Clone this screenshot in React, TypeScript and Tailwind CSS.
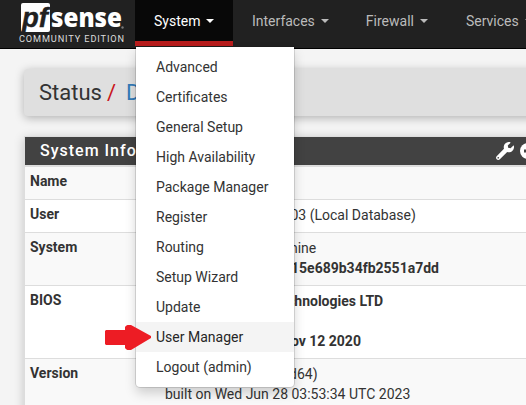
import React from "react";

const menu = [
  "Advanced", "Certificates", "General Setup", "High Availability", "Package Manager", "Register",
  "Routing", "Setup Wizard", "Update", "User Manager", "Logout (admin)",
];

function Caret() {
  return <span className="ml-1.5 h-0 w-0 border-x-4 border-t-4 border-x-transparent border-t-current" />;
}

function Logo() {
  return (
    <svg className="ml-[18px] block h-[46px] w-[110px] shrink-0" viewBox="0 0 110 46">
      <rect x="3" y="3" width="29" height="29" rx="2" fill="#fff" />
      <text x="4" y="27" fontFamily="Liberation Sans" fontSize="28" fontWeight="700" fontStyle="italic" fill="#212121" stroke="#212121" strokeWidth="0.4" textLength="26" lengthAdjust="spacingAndGlyphs">pf</text>
      <text x="33" y="27" fontFamily="Open Sans" fontSize="27" fontWeight="800" fill="#fff" textLength="71" lengthAdjust="spacingAndGlyphs">sense</text>
      <circle cx="104.500" cy="27.500" r="1.200" fill="#777" />
      <text x="1" y="42" fontFamily="Roboto" fontSize="9.200" fill="#ddd" textLength="105">COMMUNITY EDITION</text>
    </svg>
  );
}

function NavItem({ label, className }: { label: string; className: string }) {
  return (
    <a className={`flex shrink-0 items-center whitespace-nowrap pt-px text-[#bbb] ${className}`}>
      {label}
      <Caret />
    </a>
  );
}

function Row({ label, className, children }: { label: string; className: string; children?: React.ReactNode }) {
  return (
    <div className={`flex shrink-0 border-t border-[#ddd] pt-[4px] ${className}`}>
      <div className="w-[140px] shrink-0 pl-[5px] font-bold">{label}</div>
      <div className="flex-1 whitespace-nowrap pt-px">{children}</div>
    </div>
  );
}

export default function App() {
  return (
    <div className="relative h-[405px] w-[526px] overflow-hidden bg-[#f4f4f4] font-[Roboto,sans-serif] text-[14px] leading-[20px] text-[#333]">
      <header className="flex h-[49px] items-start border-b border-black bg-[#212121]">
        <Logo />
        <div className="ml-[7px] flex h-[46px] w-[98px] shrink-0 items-center border-b-[5px] border-[#b71c1c] bg-[#080808] pl-[19px] pt-px text-white">
          System
          <Caret />
        </div>
        <NavItem label="Interfaces" className="ml-[19px] h-[41px]" />
        <NavItem label="Firewall" className="ml-[37px] h-[41px]" />
        <NavItem label="Services" className="ml-[38px] h-[41px]" />
      </header>

      <div className="ml-[24px] mt-[20px] flex h-[47px] w-[540px] items-center rounded-[4px] bg-[#dfdfdf] pl-[15px] text-[22px] shadow-[0_2px_10px_rgba(0,0,0,0.28)]">
        <span>Status</span>
        <span className="ml-[5px] text-[#c9151b]">/</span>
        <span className="ml-[10px] text-[#337ab7]">Dashboard</span>
      </div>

      <section className="ml-[24px] mt-[20px] w-[540px] border border-[#ddd] bg-white shadow-[0_2px_10px_rgba(0,0,0,0.2)]">
        <h2 className="flex h-[28px] items-center bg-[#424242] pl-[15px] text-[16px] font-medium tracking-[1px] text-white">
          <span className="w-[456px] shrink-0">System Information</span>
          <svg className="h-[18px] w-[18px] shrink-0" viewBox="0 0 512 512" fill="#fff">
            <path d="M508 109c-2-9-14-12-20-5l-74 74-68-11-11-68 74-74c7-7 4-18-5-21-49-12-103 1-141 39-41 41-52 99-36 151L19 402c-25 25-25 66 0 91s66 25 91 0l208-208c52 17 110 5 151-36 38-38 51-91 39-140zM64 472a24 24 0 1 1 0-48 24 24 0 0 1 0 48z" />
          </svg>
          <svg className="ml-[6px] h-[16px] w-[16px] shrink-0" viewBox="0 0 16 16">
            <circle cx="8" cy="8" r="8" fill="#fff" />
            <path d="M4 8h8" stroke="#424242" strokeWidth="3" />
          </svg>
        </h2>
        <div className="h-px bg-[#ddd]" />
        <Row label="Name" className="h-[33px] bg-[#f9f9f9]" />
        <Row label="User" className="h-[33px]">
          <div className="pl-[125.500px]">03 (Local Database)</div>
        </Row>
        <Row label="System" className="h-[53px] bg-[#f9f9f9]">
          <div className="pl-[125px]">hine</div>
          <div className="pl-[126px] font-bold">15e689b34fb2551a7dd</div>
        </Row>
        <Row label="BIOS" className="h-[73px]">
          <div className="pl-[122px] font-bold">chnologies LTD</div>
          <div className="pl-[116px] pt-[20px] font-bold">Nov 12 2020</div>
        </Row>
        <Row label="Version" className="h-[63px] bg-[#f9f9f9]">
          <div className="pl-[124px]">d64)</div>
          <div>built on Wed Jun 28 03:53:34 UTC 2023</div>
        </Row>
      </section>

      <nav className="absolute left-[136px] top-[47px] h-[340px] w-[158px] rounded-b-[4px] bg-white py-[5px] shadow-[0_6px_12px_rgba(0,0,0,0.175),0_0_0_1px_rgba(0,0,0,0.12)]">
        {menu.map((m) => (
          <div key={m} className={`flex h-[30px] items-center pl-[20px] ${m === "User Manager" ? "bg-[#f4f4f4] text-[#262626]" : ""}`}>
            {m}
          </div>
        ))}
      </nav>
      <svg className="absolute left-[105px] top-[325px] h-[25px] w-[47px]" viewBox="0 0 47 25">
        <path d="M1 5h19V2q2-3 6-2l20 11v2L26 25q-4 1-6-2v-3H1l-1-1V6z" fill="#ed1c24" />
      </svg>
    </div>
  );
}
